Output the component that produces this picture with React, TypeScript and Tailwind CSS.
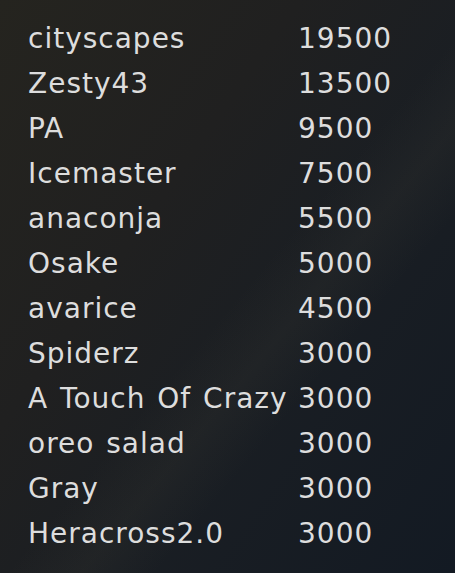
const SCORES: [string, number][] = [
  ["cityscapes", 19500],
  ["Zesty43", 13500],
  ["PA", 9500],
  ["Icemaster", 7500],
  ["anaconja", 5500],
  ["Osake", 5000],
  ["avarice", 4500],
  ["Spiderz", 3000],
  ["A Touch Of Crazy", 3000],
  ["oreo salad", 3000],
  ["Gray", 3000],
  ["Heracross2.0", 3000],
];

export default function App() {
  return (
    <div className="relative h-[573px] w-[455px] overflow-hidden bg-[linear-gradient(125deg,#25241f_0%,#202020_35%,#1a1e23_60%,#131a23_100%)]">
      {/* faint diagonal light streak */}
      <div className="pointer-events-none absolute inset-0 bg-[linear-gradient(130deg,transparent_52%,rgba(120,110,80,0.07)_60%,transparent_68%)]" />
      <div className="relative pl-[28px] pt-[16px] font-['DejaVu_Sans',sans-serif] text-[28px] leading-[45px] tracking-[1px] [word-spacing:2px] text-[#dddddd]">
        {SCORES.map(([name, score]) => (
          <div key={name} className="grid grid-cols-[270px_auto]">
            <span className="whitespace-nowrap">{name}</span>
            <span>{score}</span>
          </div>
        ))}
      </div>
    </div>
  );
}
